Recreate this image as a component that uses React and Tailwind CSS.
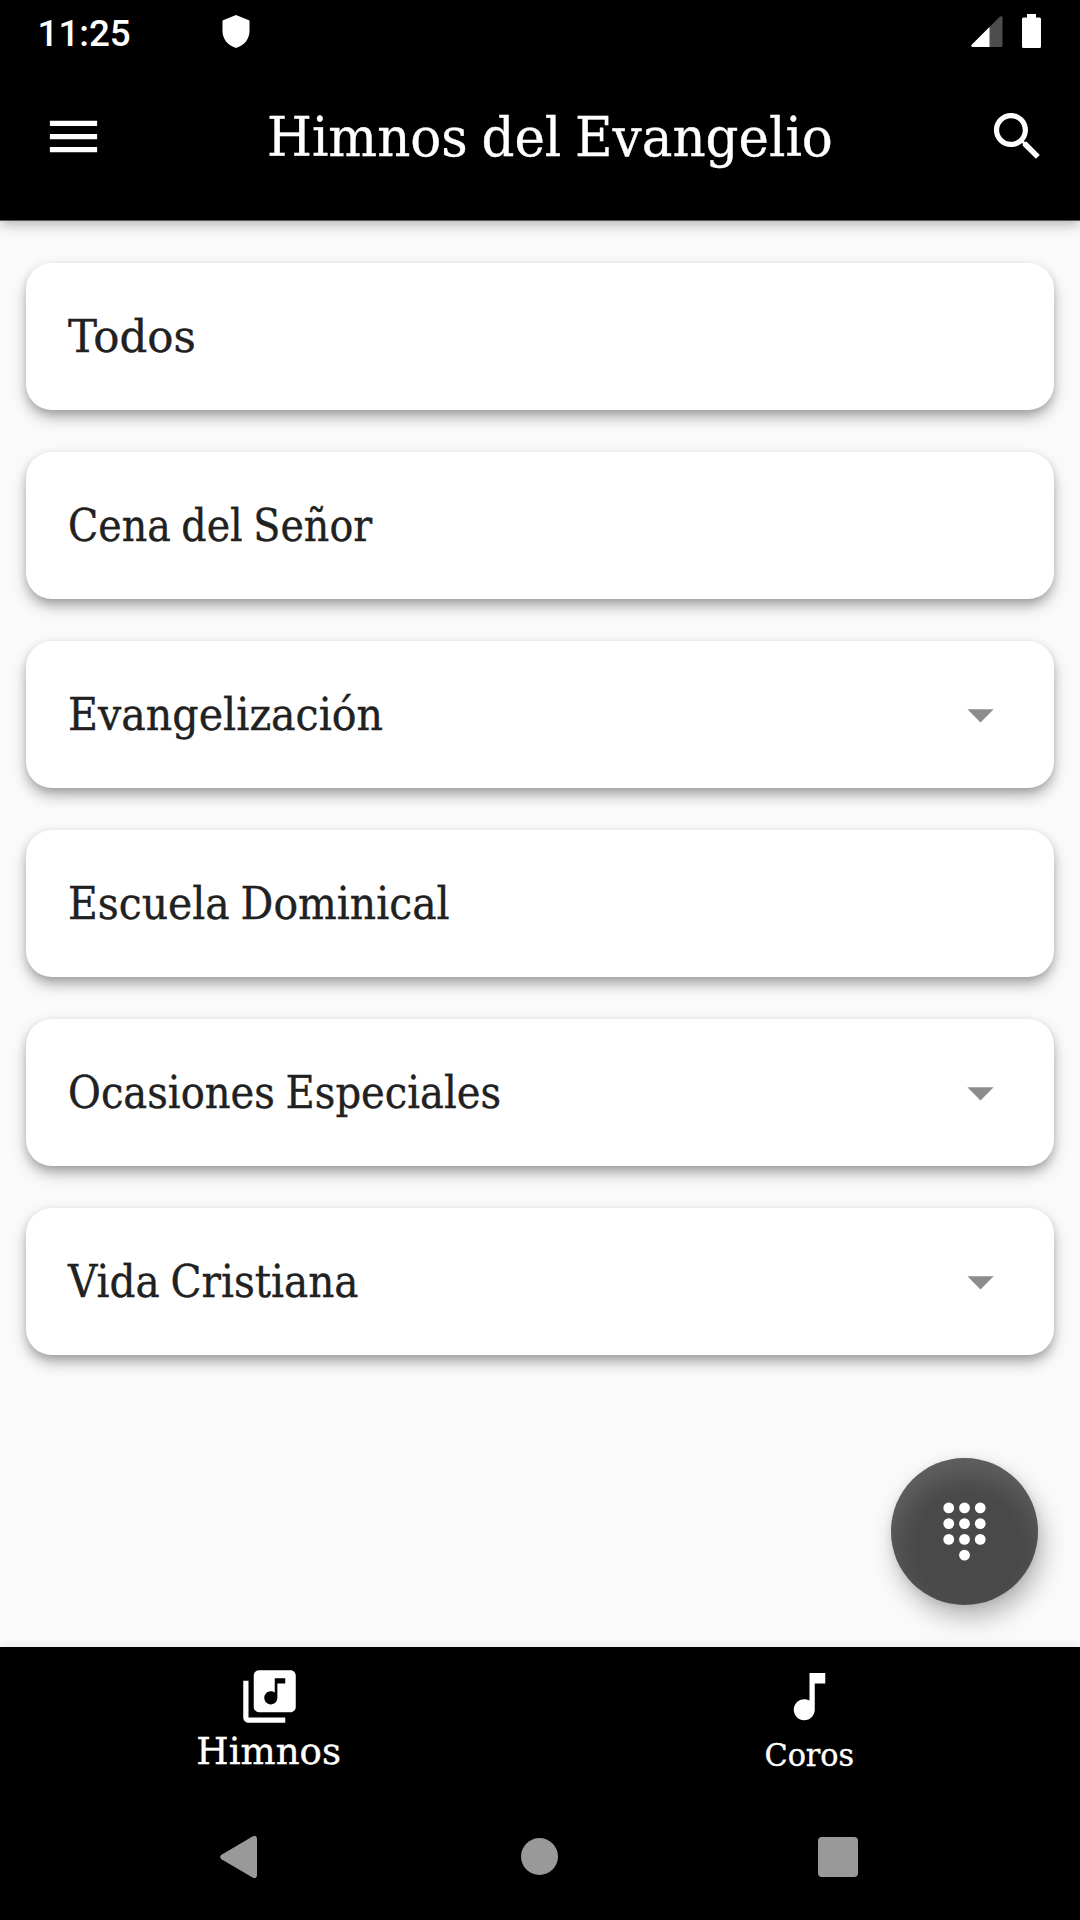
import React from "react";

const serif =
  "font-['DejaVu_Serif_Condensed','DejaVu_Serif',serif] [-webkit-text-stroke:0.35px_currentColor] inline-block whitespace-nowrap";

const categories = [
  { label: "Todos", stretch: "scale-x-[1.10]" },
  { label: "Cena del Señor", stretch: "scale-x-[1.0]" },
  { label: "Evangelización", stretch: "scale-x-[1.04]", expandable: true },
  { label: "Escuela Dominical", stretch: "scale-x-[1.033]" },
  { label: "Ocasiones Especiales", stretch: "scale-x-[1.013]", expandable: true },
  { label: "Vida Cristiana", stretch: "scale-x-[1.025]", expandable: true },
];

function Icon({ children, className = "" }) {
  return (
    <svg viewBox="0 0 24 24" fill="currentColor" className={`h-[63px] w-[63px] shrink-0 ${className}`}>
      {children}
    </svg>
  );
}

function StatusBar() {
  return (
    <div className="flex h-[63px] items-start pr-[39px] pl-[37.5px] text-white">
      <span className="mt-[12px] w-[184.5px] font-['Roboto',sans-serif] text-[36.75px] leading-[43px] font-medium">
        11:25
      </span>
      <svg viewBox="0 0 28 33" className="mt-[15px] h-[33px] w-[28px]" fill="currentColor">
        <path d="M14 0 27.5 5.5V16c0 7.500-5 14.500-13.500 17C5.500 30.500.5 23.500.5 16V5.500Z" />
      </svg>
      <svg viewBox="0 0 32 31" className="mt-[16px] ml-auto h-[31px] w-[32px]">
        <path d="M2 31Q0 31 0 29.500L29 .5Q31.500-.5 31.500 2V29.500Q31.500 31 30 31Z" fill="#4d4d4d" />
        <path d="M18.500 11V31H2Q-.5 30.500.5 29Z" fill="#fff" />
      </svg>
      <svg viewBox="0 0 19 34" className="mt-[14px] ml-[19px] h-[34px] w-[19px]" fill="currentColor">
        <path d="M5 0h9v3.500h3.500Q19 3.500 19 5v27.500q0 1.500-1.500 1.500h-16Q0 34 0 32.500V5Q0 3.500 1.500 3.500H5Z" />
      </svg>
    </div>
  );
}

function Header() {
  return (
    <header className="relative z-10 h-[221px] border-b border-[#5a5456] bg-black text-white shadow-[0_3px_13px_rgba(0,0,0,0.3)]">
      <StatusBar />
      <div className="flex h-[147px] items-center pr-[31px] pl-[42px]">
        <Icon>
          <path d="M3 18h18v-2H3v2zm0-5h18v-2H3v2zm0-7v2h18V6H3z" />
        </Icon>
        <h1 className={`ml-[161.5px] origin-left scale-x-[1.05] text-[54.5px] leading-[74px] [word-spacing:-2.5px] ${serif}`}>
          Himnos del Evangelio
        </h1>
        <Icon className="ml-auto">
          <path d="M15.5 14h-.79l-.28-.27C15.41 12.59 16 11.11 16 9.5 16 5.91 13.09 3 9.5 3S3 5.91 3 9.5 5.91 16 9.5 16c1.61 0 3.09-.59 4.23-1.57l.27.28v.79l5 4.99L20.49 19l-4.99-5zm-6 0C7.01 14 5 11.99 5 9.5S7.01 5 9.5 5 14 7.01 14 9.5 11.99 14 9.500 14z" />
        </Icon>
      </div>
    </header>
  );
}

function Category({ label, stretch, expandable }) {
  return (
    <li className="flex h-[147px] items-center justify-between rounded-[26px] bg-white pr-[42px] pl-[42px] shadow-[0_8px_15px_-2px_rgba(0,0,0,0.36),0_2px_9px_rgba(0,0,0,0.1)]">
      <span
        className={`mt-[2px] origin-left text-[44px] leading-[60px] text-[#212121] [word-spacing:-2px] ${stretch} ${serif}`}
      >
        {label}
      </span>
      {expandable && (
        <Icon className="mt-px text-[#8c8c8c]">
          <path d="M7 10l5 5 5-5z" />
        </Icon>
      )}
    </li>
  );
}

function DialButton() {
  return (
    <button className="absolute right-[42px] bottom-[42px] flex h-[147px] w-[147px] items-center justify-center rounded-full bg-[#494949] text-white shadow-[5px_13px_25px_rgba(0,0,0,0.27),0_2px_8px_rgba(0,0,0,0.08),inset_4px_16px_26px_rgba(255,255,255,0.13)]">
      <Icon>
        {[3, 9, 15].map((y) => [6, 12, 18].map((x) => <circle key={`${x}-${y}`} cx={x} cy={y} r="2.05" />))}
        <circle cx="12" cy="21" r="2.050" />
      </Icon>
    </button>
  );
}

function BottomTabs() {
  return (
    <nav className="grid h-[147px] grid-cols-2 text-white">
      <div className="flex flex-col items-center pt-[18px] pr-[2px]">
        <Icon>
          <path d="M20 2H8c-1.100 0-2 .9-2 2v12c0 1.100.9 2 2 2h12c1.100 0 2-.9 2-2V4c0-1.100-.9-2-2-2zm-2 5h-3v5.500c0 1.380-1.120 2.500-2.500 2.500S10 13.880 10 12.500s1.120-2.500 2.500-2.500c.57 0 1.080.19 1.500.51V5h4v2zM4 6H2v14c0 1.100.9 2 2 2h14v-2H4V6z" />
        </Icon>
        <span className={`-mt-[2px] scale-x-[1.085] text-[38px] leading-[50px] ${serif}`}>Himnos</span>
      </div>
      <div className="flex flex-col items-center pt-[18px] pr-[1px]">
        <Icon>
          <path d="M12 3v10.550c-.59-.34-1.270-.55-2-.55-2.210 0-4 1.790-4 4s1.790 4 4 4 4-1.790 4-4V7h4V3h-6z" />
        </Icon>
        <span className={`mt-[2px] scale-x-[1.035] text-[32.5px] leading-[50px] ${serif}`}>Coros</span>
      </div>
    </nav>
  );
}

function SystemNav() {
  return (
    <div className="flex h-[126px] items-center pl-[220px] text-[#999]">
      <svg viewBox="0 0 37 42" className="h-[42px] w-[37px]" fill="currentColor">
        <path d="M32.500.6Q37-1.500 37 3V39Q37 43.500 32.500 41.400L1.500 23.200Q-1.200 21 1.500 18.800Z" />
      </svg>
      <div className="mb-px ml-[264px] h-[37px] w-[37px] rounded-full bg-[#999]" />
      <div className="ml-[260px] h-[40px] w-[40px] rounded-[4px] bg-[#999]" />
    </div>
  );
}

export default function App() {
  return (
    <div className="flex h-[1920px] w-[1080px] flex-col overflow-hidden bg-[#fafafa]">
      <Header />
      <main className="relative flex-1">
        <ul className="flex flex-col gap-[42px] px-[26px] pt-[41.5px]">
          {categories.map((category) => (
            <Category key={category.label} {...category} />
          ))}
        </ul>
        <DialButton />
      </main>
      <footer className="bg-black shadow-[0_-2px_10px_rgba(0,0,0,0.06)]">
        <BottomTabs />
        <SystemNav />
      </footer>
    </div>
  );
}
